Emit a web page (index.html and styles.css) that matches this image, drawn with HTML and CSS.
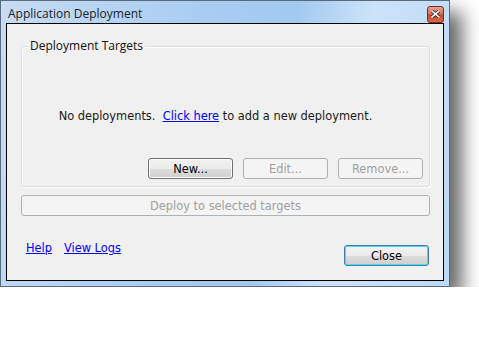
FILE: index.html
```html
<!DOCTYPE html>
<html lang="en">
<head>
    <meta charset="UTF-8">
    <title>Application Deployment</title>
    <link rel="stylesheet" href="styles.css">
</head>
<body>
    <div class="window">
        <div class="titlebar">
            <span class="title">Application Deployment</span>
            <span class="close-x">
                <svg width="9" height="8" viewBox="0 0 9 8">
                    <path d="M1 1 L8 7 M8 1 L1 7" stroke="#3a2a28" stroke-width="3.2" stroke-linecap="square"/>
                    <path d="M1 1 L8 7 M8 1 L1 7" stroke="#fff" stroke-width="1.6" stroke-linecap="square"/>
                </svg>
            </span>
        </div>

        <div class="client">
            <div class="group">
                <span class="group-label">Deployment Targets</span>
                <p class="empty">No deployments.  <a href="#">Click here</a> to add a new deployment.</p>
                <div class="actions">
                    <button class="btn">New...</button>
                    <button class="btn" disabled>Edit...</button>
                    <button class="btn" disabled>Remove...</button>
                </div>
            </div>

            <button class="btn wide" disabled>Deploy to selected targets</button>

            <div class="footer">
                <div class="links">
                    <a href="#">Help</a>
                    <a href="#">View Logs</a>
                </div>
                <button class="btn default">Close</button>
            </div>
        </div>
    </div>
</body>
</html>
```

FILE: styles.css
```css
body {
    margin: 0;
    padding: 0;
    background-color: white;
    font-family: "DejaVu Sans", Verdana, sans-serif;
    font-size: 11.4px;
    color: #1a1a1a;
}

.window {
    width: 450px;
    height: 287px;
    box-sizing: border-box;
    border: 1px solid #5a6a7a;
    background: linear-gradient(100deg, #c6dcf3 0%, #a9cdf1 40%, #a4c9ef 60%, #cbe3f9 75%, #bcd9f5 100%);
    box-shadow: 12px 12px 18px rgba(0, 0, 0, 0.6);
    display: flex;
    flex-direction: column;
    padding: 0 5px 5px 5px;
}

.titlebar {
    height: 22px;
    display: flex;
    align-items: center;
    justify-content: space-between;
}

.title {
    font-family: "Open Sans", "Noto Sans", sans-serif;
    font-size: 12px;
    color: #1e1e1e;
    padding-left: 2px;
    padding-top: 2px;
}

.close-x {
    width: 15px;
    height: 15px;
    margin-top: 4px;
    border: 1px solid #7a2d22;
    border-radius: 3px;
    background: linear-gradient(#e9a28c 0%, #d9705a 45%, #c44a2e 55%, #d66a44 100%);
    display: flex;
    align-items: center;
    justify-content: center;
}

.client {
    flex: 1;
    border: 1px solid #000;
    background-color: #f0f0f0;
    padding: 22px 13px 0 14px;
    display: flex;
    flex-direction: column;
}

.group {
    position: relative;
    height: 139px;
    border: 1px solid #d5dfe5;
    border-radius: 3px;
    box-shadow: inset 1px 1px 0 #fff, 1px 1px 0 #fff;
    display: flex;
    flex-direction: column;
}

.group-label {
    position: absolute;
    left: 6px;
    top: -9px;
    padding: 0 2px;
    background-color: #f0f0f0;
    font-family: "Open Sans", "Noto Sans", sans-serif;
    font-size: 12px;
    line-height: 16px;
    color: #111;
}

.empty {
    margin: 0;
    flex: 1;
    display: flex;
    align-items: center;
    justify-content: center;
    padding: 26px 20px 0 0;
    white-space: pre;
}

a {
    color: #0000ff;
}

.actions {
    display: flex;
    justify-content: flex-end;
    gap: 10px;
    padding: 0 6px 7px 0;
}

.btn {
    width: 85px;
    height: 21px;
    box-sizing: border-box;
    border: 1px solid #707070;
    border-radius: 3px;
    background: linear-gradient(#f2f2f2 0%, #ebebeb 50%, #dddddd 51%, #cfcfcf 100%);
    box-shadow: inset 0 0 0 1px #fbfbfb;
    font-family: "DejaVu Sans", Verdana, sans-serif;
    font-size: 11.4px;
    color: #000;
    padding: 0;
}

.btn:disabled {
    border-color: #adb2b5;
    background: #f4f4f4;
    box-shadow: none;
    color: #a0a0a0;
}

.wide {
    width: 100%;
    margin-top: 8px;
}

.footer {
    flex: 1;
    display: flex;
    justify-content: space-between;
    align-items: flex-start;
    padding: 29px 1px 0 5px;
}

.links {
    display: flex;
    gap: 12px;
    margin-top: -4px;
}

.default {
    border-color: #3c7fb1;
    box-shadow: inset 0 0 0 1px #48d8fb;
}
```
